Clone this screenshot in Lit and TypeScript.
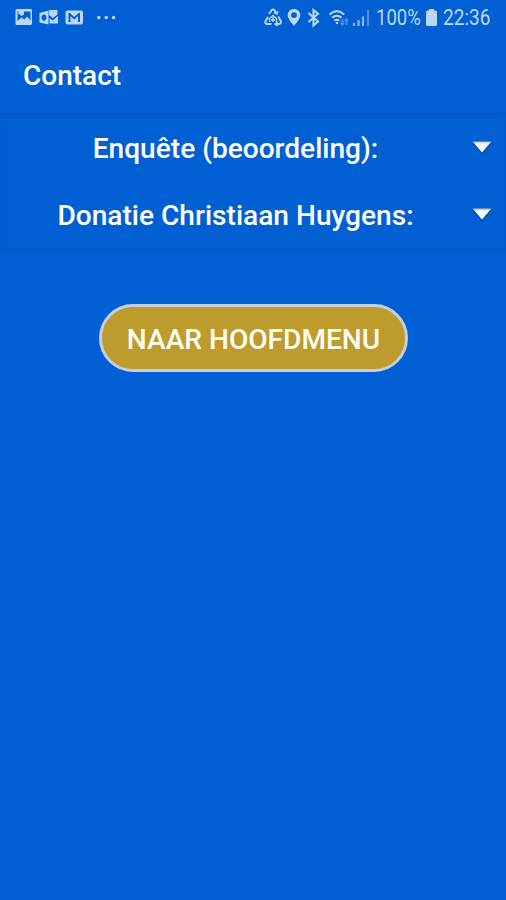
import { LitElement, html, css } from "lit";
import { customElement } from "lit/decorators.js";

const ROWS = ["Enquête (beoordeling):", "Donatie Christiaan Huygens:"];

@customElement("status-bar")
class StatusBar extends LitElement {
  static styles = css`
    :host { display: flex; height: 36px; box-sizing: border-box; color: #bcd6f8; justify-content: space-between; }
    svg { display: block; width: 130px; height: 36px; }
    .right { display: flex; }
    .right svg { width: 121px; }
    .status { display: flex; width: 130px; height: 36px; }
    .status svg { width: 14px; }
    .pct, .time { font: 400 21.500px/36px Roboto, sans-serif; white-space: nowrap; transform: scaleX(0.86); transform-origin: 0 50%; }
    .pct { width: 49px; }
    .time { margin-left: 4px; transform: scaleX(0.885); }
  `;

  render() {
    return html`
      <svg viewBox="0 0 130 36" fill="currentColor">
        <path fill-rule="evenodd" d="M17 9h13.500q1.500 0 1.500 1.500v13q0 1.500-1.500 1.500h-13.500q-1.500 0-1.500-1.500v-13q0-1.500 1.500-1.500zM17.500 11.500v9.500l4-3.500 3 2 2.500-3 3.500 4v-9h-6.500v3l-2.500 1.500-2-2-1 1v-3.500z"/>
        <path fill-rule="evenodd" d="M39.500 13l9-2.500v14l-9-2zM44 14.500c-3.300 0-3.300 6.200 0 6.200s3.300-6.200 0-6.200z"/>
        <path d="M49 10h8.500v4.500l-4.500 3.500-4-3zM49.500 18l3 2.500 5.500-4.500v7.500h-8.500z"/>
        <path fill-rule="evenodd" d="M67.500 10.500h13.500q2 0 2 2v10q0 2-2 2h-13.500q-2 0-2-2v-10q0-2 2-2zM68.500 13v9h2v-6l3.700 3.500 3.800-3.500v6h2v-9h-1.500l-4.300 4-4.200-4z"/>
        <circle cx="98.800" cy="17.500" r="1.700"/><circle cx="106.200" cy="17.500" r="1.700"/><circle cx="113.600" cy="17.500" r="1.700"/>
      </svg>
      <div class="right">
        <svg viewBox="255 0 121 36" fill="none" stroke="currentColor" stroke-width="1.900">
          <path d="M269 14l2.800-4q1.200-1 2.400 0l2.300 3.500M278.300 16.500l2.700 5q0 2.500-2 2.500h-4M271.500 24h-4.500q-2.500-.5-1.500-2.800l2.500-4.200"/>
          <path stroke-width="1.400" d="M269.500 22v-3.500l3.500-3 3.500 3v3.500M271 20h4M273 17v5M274 12.500l3 1.500 1-3M277.500 22l-2.500 2 2.500 2"/>
          <path fill="currentColor" stroke="none" fill-rule="evenodd" d="M294 9c-3.600 0-6.300 2.700-6.300 6.100 0 4.300 6.300 10.900 6.300 10.900s6.300-6.600 6.300-10.900c0-3.400-2.700-6.100-6.300-6.100zM294 12.200a2.900 2.900 0 1 1 0 5.800 2.900 2.900 0 0 1 0-5.800z"/>
          <path stroke-width="2.100" d="M308.500 13l9.500 8.500-4.500 4v-15.500l4.500 3.800-9.500 8.200"/>
          <path stroke-width="2" d="M329.500 14.500q7.300-6.800 14.700 0M332.300 17.800q4.600-4 9.200 0M334.500 20.800q2.400-2 4.800 0"/>
          <circle cx="337" cy="23" r="1.200" fill="currentColor" stroke="none"/>
          <path stroke-width="1.800" opacity=".4" d="M342.500 19v5.500M340.800 22.500l1.700 2 1.700-2M346.500 25v-5.500M344.800 21l1.700-2 1.700 2"/>
          <path opacity=".75" stroke-width="2.200" d="M354 26v-3M358.500 26v-6M363 26v-9.500"/>
          <path opacity=".4" stroke-width="2.200" d="M368 26v-16"/>
        </svg>
        <div class="status">
          <span class="pct">100%</span>
          <svg viewBox="0 0 14 36" fill="currentColor"><path d="M4 9h5v1.500h1.500q1.500 0 1.500 1.500v12.500q0 1.500-1.500 1.500h-8q-1.500 0-1.500-1.500v-12.500q0-1.500 1.500-1.500h1.500z"/></svg>
          <span class="time">22:36</span>
        </div>
      </div>
    `;
  }
}

@customElement("app-root")
class AppRoot extends LitElement {
  static styles = css`
    :host { display: flex; flex-direction: column; height: 900px; background: #005fd3; color: #fff; font: 500 28.100px/34px Roboto, sans-serif; overflow: hidden; }
    .bar { height: 78px; box-sizing: border-box; padding: 23px 23px 0; border-bottom: 1px solid #0051b6; font-size: 28px; }
    .list { height: 136px; box-sizing: border-box; border-bottom: 1px solid #0053b9; box-shadow: inset 0 3px 3px -1px #0058c5, 0 2px 2px #005aca; }
    .row { display: flex; height: 67.500px; align-items: center; }
    .label { width: 471px; text-align: center; padding-top: 2px; }
    .arrow { width: 24px; height: 18px; margin: 0 0 2px -1px; }
    .button { margin: 54px auto 0; width: 309px; height: 68px; box-sizing: border-box; border: 3px solid #c8cee0; border-radius: 34px; background: #be9b2d; color: #fffef5; font: inherit; padding: 4px 0 0 1px; white-space: nowrap; }
  `;

  render() {
    return html`
      <status-bar></status-bar>
      <header class="bar">Contact</header>
      <div class="list">
        ${ROWS.map((label) => html`
          <div class="row">
            <span class="label">${label}</span>
            <svg class="arrow" viewBox="0 0 24 18">
              <defs><linearGradient id="g" x2="0" y2="1"><stop offset="0" stop-color="#b3b9c2"/><stop offset=".25" stop-color="#fff"/></linearGradient></defs>
              <path d="M2 5.500h20l-10 10.500z" fill="#003b91" opacity=".6"/>
              <path d="M2.500 3.500h19l-9.500 11z" fill="url(#g)"/>
            </svg>
          </div>`)}
      </div>
      <button class="button">NAAR HOOFDMENU</button>
    `;
  }
}
